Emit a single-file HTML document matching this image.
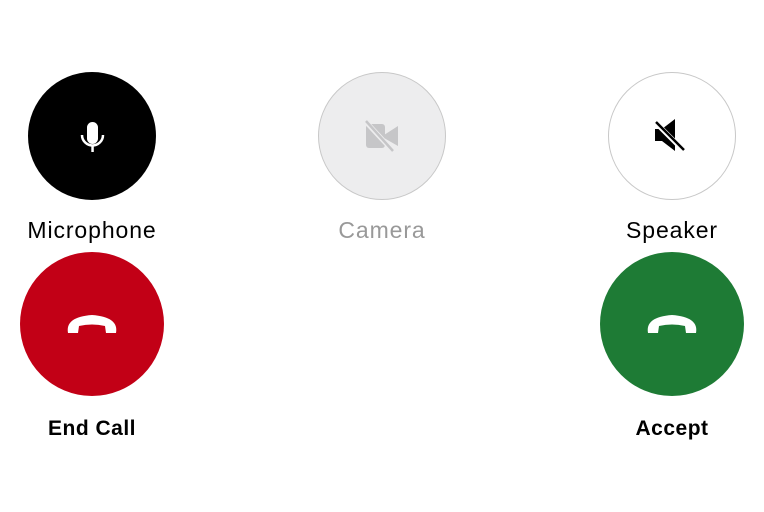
<!DOCTYPE html>
<html><head><style>
body{margin:0;width:764px;height:512px;background:#fff;font-family:"Liberation Sans",sans-serif;position:relative;overflow:hidden}
.c{position:absolute;border-radius:50%;box-sizing:border-box}
.l{position:absolute;font-size:23px;letter-spacing:0.9px;text-align:center;width:200px}
.b{font-weight:bold;font-size:21px;letter-spacing:0.5px}
svg{position:absolute}
</style></head><body>
<div class="c" style="left:28px;top:72px;width:128px;height:128px;background:#000"></div>
<svg style="left:60px;top:110px" width="64" height="50" viewBox="0 0 64 50">
<rect x="27" y="12" width="11" height="22" rx="5.5" fill="#fff"/>
<path d="M22 25 a10.5 10.5 0 0 0 21 0" stroke="#fff" stroke-width="2.5" fill="none"/>
<rect x="31.3" y="35" width="2.5" height="7" fill="#fff"/>
</svg>
<div class="l" style="left:-8px;top:217px;color:#000">Microphone</div>

<div class="c" style="left:318px;top:72px;width:128px;height:128px;background:#ededee;border:1px solid #c8c8c8"></div>
<svg style="left:350px;top:110px" width="64" height="50" viewBox="0 0 64 50">
<rect x="16" y="14" width="19" height="24" rx="3" fill="#c6c6c8"/>
<path d="M34 25 L48 16 V36 L34 28Z" fill="#c6c6c8"/>
<path d="M15 11 L44 42" stroke="#ededee" stroke-width="5"/>
<path d="M16 11 L43 41" stroke="#c6c6c8" stroke-width="2.5"/>
</svg>
<div class="l" style="left:282px;top:217px;color:#999">Camera</div>

<div class="c" style="left:608px;top:72px;width:128px;height:128px;background:#fff;border:1px solid #c8c8c8"></div>
<svg style="left:640px;top:110px" width="64" height="50" viewBox="0 0 64 50">
<path d="M15 19 H22 L35 9 V41 L22 31 H15Z" fill="#000"/>
<path d="M15 12 L44 41" stroke="#fff" stroke-width="5"/>
<path d="M16 12 L44 40" stroke="#000" stroke-width="2.5"/>
</svg>
<div class="l" style="left:572px;top:217px;color:#000">Speaker</div>

<div class="c" style="left:20px;top:252px;width:144px;height:144px;background:#c20016"></div>
<svg style="left:60px;top:305px" width="64" height="40" viewBox="0 0 64 40">
<path d="M8 28 Q5 12 32 10 Q59 12 56 28 L46 28 L45 21 Q32 18 19 21 L18 28Z" fill="#fff"/>
</svg>
<div class="l b" style="left:-8px;top:417px">End Call</div>

<div class="c" style="left:600px;top:252px;width:144px;height:144px;background:#1e7b35"></div>
<svg style="left:640px;top:305px" width="64" height="40" viewBox="0 0 64 40">
<path d="M8 28 Q5 12 32 10 Q59 12 56 28 L46 28 L45 21 Q32 18 19 21 L18 28Z" fill="#fff"/>
</svg>
<div class="l b" style="left:572px;top:417px">Accept</div>
</body></html>
